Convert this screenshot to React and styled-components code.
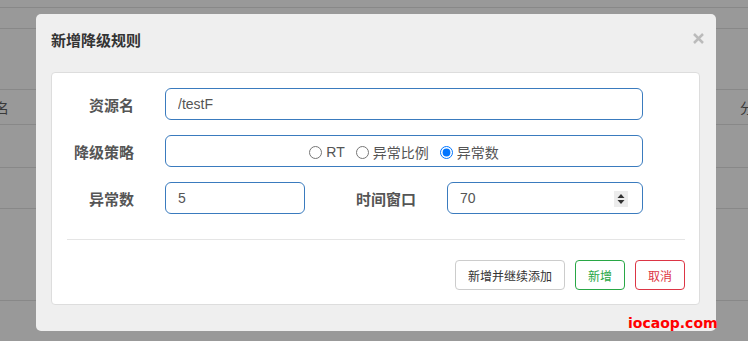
import React from 'react'
import styled, { createGlobalStyle } from 'styled-components'

const GlobalStyle = createGlobalStyle`
  html, body {
    margin: 0;
    padding: 0;
    background: #999;
    font-family: "Liberation Sans", "Noto Sans CJK SC", sans-serif;
  }
`

const Page = styled.div`
  position: relative;
  width: 748px;
  height: 341px;
  overflow: hidden;
  background: #999;
`

// table behind the backdrop
const BgRow = styled.div`
  height: ${props => props.h}px;
  border-bottom: 1px solid #888;
  display: flex;
  align-items: center;
  justify-content: space-between;
  font-size: 14px;
  color: #3a3a3a;
`

const BgCell = styled.span`
  margin-left: ${props => props.ml || 0}px;
  margin-right: ${props => props.mr || 0}px;
`

const Modal = styled.div`
  position: absolute;
  left: 36px;
  top: 14px;
  width: 680px;
  height: 317px;
  background: #efefef;
  border-radius: 5px;
  display: flex;
  flex-direction: column;
`

const Header = styled.div`
  height: 58px;
  padding: 10px 12px 0 15px;
  box-sizing: border-box;
  display: flex;
  justify-content: space-between;
  align-items: flex-start;
`

const Title = styled.div`
  margin-top: 7px;
  font-size: 15px;
  line-height: 20px;
  font-weight: bold;
  color: #333;
`

const Close = styled.button`
  border: none;
  background: none;
  padding: 0;
  margin-top: 9px;
  width: 11px;
  height: 11px;
  display: flex;
  cursor: pointer;
`

const Panel = styled.div`
  margin: 0 16px 0 15px;
  background: #fff;
  border: 1px solid #ddd;
  border-radius: 4px;
  padding: 15px 15px 14px 15px;
`

const Row = styled.div`
  display: flex;
  align-items: center;
  height: 32px;
  margin-bottom: ${props => (props.last ? 0 : 15)}px;
`

const Label = styled.label`
  width: ${props => props.w}px;
  margin-right: 31px;
  text-align: right;
  font-size: 15px;
  font-weight: bold;
  color: #555;
  line-height: 32px;
  padding-top: 3px;
  box-sizing: border-box;
  flex-shrink: 0;
`

const Field = styled.div`
  width: ${props => props.w}px;
  height: 32px;
  box-sizing: border-box;
  border: 1px solid #3a7bbe;
  border-radius: 6px;
  display: flex;
  align-items: center;
  justify-content: ${props => (props.center ? 'center' : 'space-between')};
  padding: 0 14px 0 12px;
  background: #fff;
`

const Input = styled.input`
  border: none;
  outline: none;
  padding: 0;
  flex: 1;
  min-width: 0;
  font-family: "Liberation Sans", "Noto Sans CJK SC", sans-serif;
  font-size: 14px;
  color: #555;
  background: transparent;
`

const Spinner = styled.span`
  width: 14px;
  height: 16px;
  background: #ececec;
  display: flex;
  align-items: center;
  justify-content: center;
  flex-shrink: 0;
  margin-top: 1px;
`

const RadioGroup = styled.div`
  display: flex;
  align-items: center;
  gap: 11px;
  padding-left: 2px;
`

const RadioLabel = styled.label`
  display: inline-flex;
  align-items: center;
  gap: 4px;
  font-size: 14px;
  color: #555;
  padding-top: 2px;
  input {
    margin: 0;
    width: 13px;
    height: 13px;
  }
`

const Divider = styled.div`
  height: 1px;
  background: #e5e5e5;
  margin: 25px -1px 20px 0;
`

const Footer = styled.div`
  display: flex;
  justify-content: flex-end;
  gap: 10px;
  margin-right: -1px;
`

const colors = {
  default: { border: '#ccc', text: '#333' },
  success: { border: '#28a745', text: '#28a745' },
  danger: { border: '#dc3545', text: '#dc3545' },
}

const Button = styled.button`
  height: 30px;
  padding: 0 12px;
  font-family: "Liberation Sans", "Noto Sans CJK SC", sans-serif;
  font-size: 12px;
  background: #fff;
  border: 1px solid ${props => colors[props.kind].border};
  color: ${props => colors[props.kind].text};
  border-radius: 4px;
  cursor: pointer;
`

const Watermark = styled.div`
  position: absolute;
  left: 628px;
  top: 315px;
  font-family: "DejaVu Sans", sans-serif;
  font-weight: bold;
  font-size: 14px;
  line-height: 16px;
  color: #f00;
`

const bgRows = [7, 20, 60, 34, 42, 40, 91]

export default function App() {
  return (
    <Page>
      <GlobalStyle />
      {bgRows.map((h, i) => (
        <BgRow key={i} h={h}>
          {i === 3 && (
            <>
              <BgCell ml={-5}>名</BgCell>
              <BgCell mr={-6}>分</BgCell>
            </>
          )}
        </BgRow>
      ))}

      <Modal>
        <Header>
          <Title>新增降级规则</Title>
          <Close aria-label="close">
            <svg width="11" height="11" viewBox="0 0 11 11">
              <path d="M1 1L10 10M10 1L1 10" stroke="#bbb" strokeWidth="2.5" />
            </svg>
          </Close>
        </Header>
        <Panel>
          <Row>
            <Label w={67}>资源名</Label>
            <Field w={478}>
              <Input defaultValue="/testF" />
            </Field>
          </Row>
          <Row>
            <Label w={67}>降级策略</Label>
            <Field w={478} center>
              <RadioGroup>
                <RadioLabel>
                  <input type="radio" name="grade" />
                  RT
                </RadioLabel>
                <RadioLabel>
                  <input type="radio" name="grade" />
                  异常比例
                </RadioLabel>
                <RadioLabel>
                  <input type="radio" name="grade" defaultChecked />
                  异常数
                </RadioLabel>
              </RadioGroup>
            </Field>
          </Row>
          <Row last>
            <Label w={67}>异常数</Label>
            <Field w={140}>
              <Input defaultValue="5" />
            </Field>
            <Label w={111}>时间窗口</Label>
            <Field w={196}>
              <Input defaultValue="70" />
              <Spinner>
                <svg width="8" height="12" viewBox="0 0 8 12">
                  <path d="M4 1L7.5 5H0.5Z M4 11L7.5 7H0.5Z" fill="#333" />
                </svg>
              </Spinner>
            </Field>
          </Row>
          <Divider />
          <Footer>
            <Button kind="default">新增并继续添加</Button>
            <Button kind="success">新增</Button>
            <Button kind="danger">取消</Button>
          </Footer>
        </Panel>
      </Modal>
      <Watermark>iocaop.com</Watermark>
    </Page>
  )
}
